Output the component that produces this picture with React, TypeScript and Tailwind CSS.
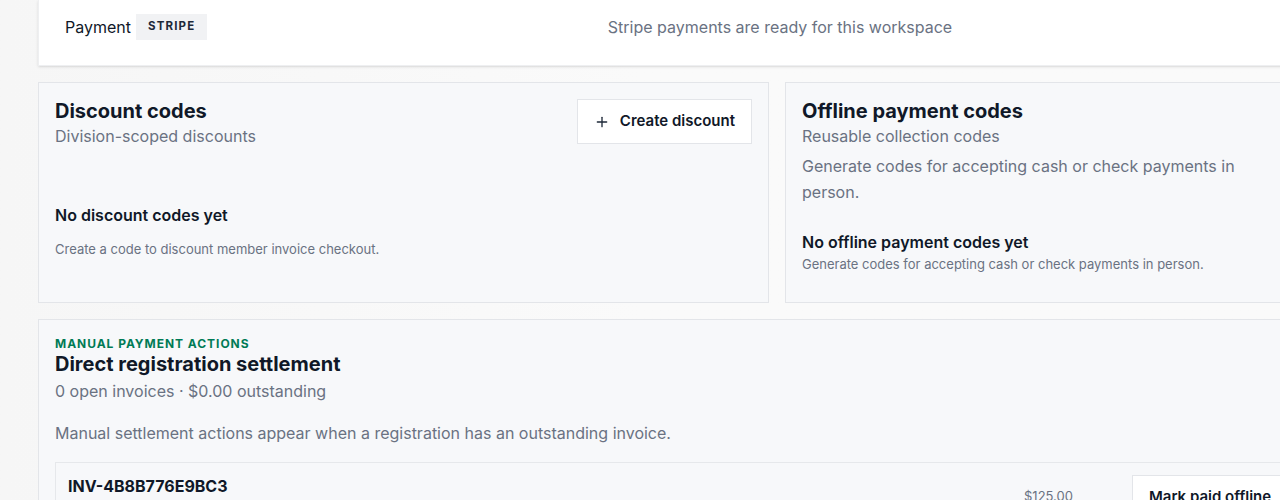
import React from 'react';
import { Plus } from 'lucide-react';

const font = { fontFamily: 'Inter, "Noto Sans", sans-serif' };

const Card = ({ children, className = '' }: { children: React.ReactNode; className?: string }) => (
    <div className={`border border-[#e3e5e9] bg-[#f7f8fa] ${className}`}>{children}</div>
);

const OutlineButton = ({ children, className = '' }: { children: React.ReactNode; className?: string }) => (
    <button className={`flex h-[45px] shrink-0 items-center gap-2.5 border border-[#e3e5e9] bg-white px-4 text-[15px] font-semibold text-gray-900 ${className}`}>
        {children}
    </button>
);

export default function App() {
    return (
        <div className="min-h-screen overflow-hidden bg-gradient-to-r from-[#f6f6f6] via-[#fafafa] to-[#fafafa] pl-[38px]" style={font}>
            <div className="flex w-[1478px] flex-col gap-4">
                {/* provider row */}
                <div className="grid h-[66px] grid-cols-[1fr_auto_1fr] items-start border-x border-b border-[#eeeff1] bg-white px-[26px] pt-[14px] shadow-sm">
                    <div className="flex h-[26px] items-center gap-[5px]">
                        <span className="text-base text-gray-900">Payment</span>
                        <span className="flex h-[26px] items-center bg-[#f1f2f4] px-3 text-[11.5px] font-bold tracking-widest text-gray-800">STRIPE</span>
                    </div>
                    <p className="flex h-[26px] items-center pl-[6px] text-base text-gray-500">Stripe payments are ready for this workspace</p>
                    <div />
                </div>

                <div className="grid grid-cols-2 gap-4">
                    <Card className="p-4">
                        <div className="flex items-start justify-between">
                            <div>
                                <h2 className="text-xl leading-[25px] font-bold text-gray-900">Discount codes</h2>
                                <p className="text-base text-gray-500">Division-scoped discounts</p>
                            </div>
                            <OutlineButton>
                                <Plus className="h-4 w-4 text-gray-800" strokeWidth={2} />
                                Create discount
                            </OutlineButton>
                        </div>
                        <div className="mt-[31px] pt-6 pb-[27px]">
                            <p className="text-base font-semibold text-gray-900">No discount codes yet</p>
                            <p className="mt-3 text-[13px] leading-5 text-gray-500">Create a code to discount member invoice checkout.</p>
                        </div>
                    </Card>

                    <Card className="p-4">
                        <h2 className="text-xl leading-[25px] font-bold text-gray-900">Offline payment codes</h2>
                        <p className="text-base text-gray-500">Reusable collection codes</p>
                        <p className="mt-[5px] max-w-md text-base leading-[26px] text-gray-500">
                            Generate codes for accepting cash or check payments in person.
                        </p>
                        <div className="mt-[25px]">
                            <p className="text-base font-semibold text-gray-900">No offline payment codes yet</p>
                            <p className="text-[13px] leading-5 text-gray-500">Generate codes for accepting cash or check payments in person.</p>
                        </div>
                    </Card>
                </div>

                <Card className="p-4">
                    <p className="text-[12px] leading-[16px] font-bold tracking-[0.08em] text-emerald-700">MANUAL PAYMENT ACTIONS</p>
                    <h2 className="text-xl leading-[25px] font-bold text-gray-900">Direct registration settlement</h2>
                    <p className="mt-0.5 text-base text-gray-500">0 open invoices · $0.00 outstanding</p>
                    <p className="mt-[18px] text-base text-gray-500">
                        Manual settlement actions appear when a registration has an outstanding invoice.
                    </p>

                    <div className="mt-[17px] flex items-start border border-[#e6e8eb] bg-[#f7f8fa] px-3 pt-[11px] pb-4">
                        <div className="w-[956px] shrink-0">
                            <p className="text-base font-bold text-gray-900">INV-4B8B776E9BC3</p>
                            <p className="text-[13px] text-gray-500">Registration balance</p>
                        </div>
                        <p className="mt-3 text-[13px] leading-5 text-gray-500">$125.00</p>
                        <OutlineButton className="mt-px ml-[59px]">Mark paid offline</OutlineButton>
                        <OutlineButton className="mt-px ml-2">Waive balance</OutlineButton>
                    </div>
                </Card>
            </div>
        </div>
    );
}
